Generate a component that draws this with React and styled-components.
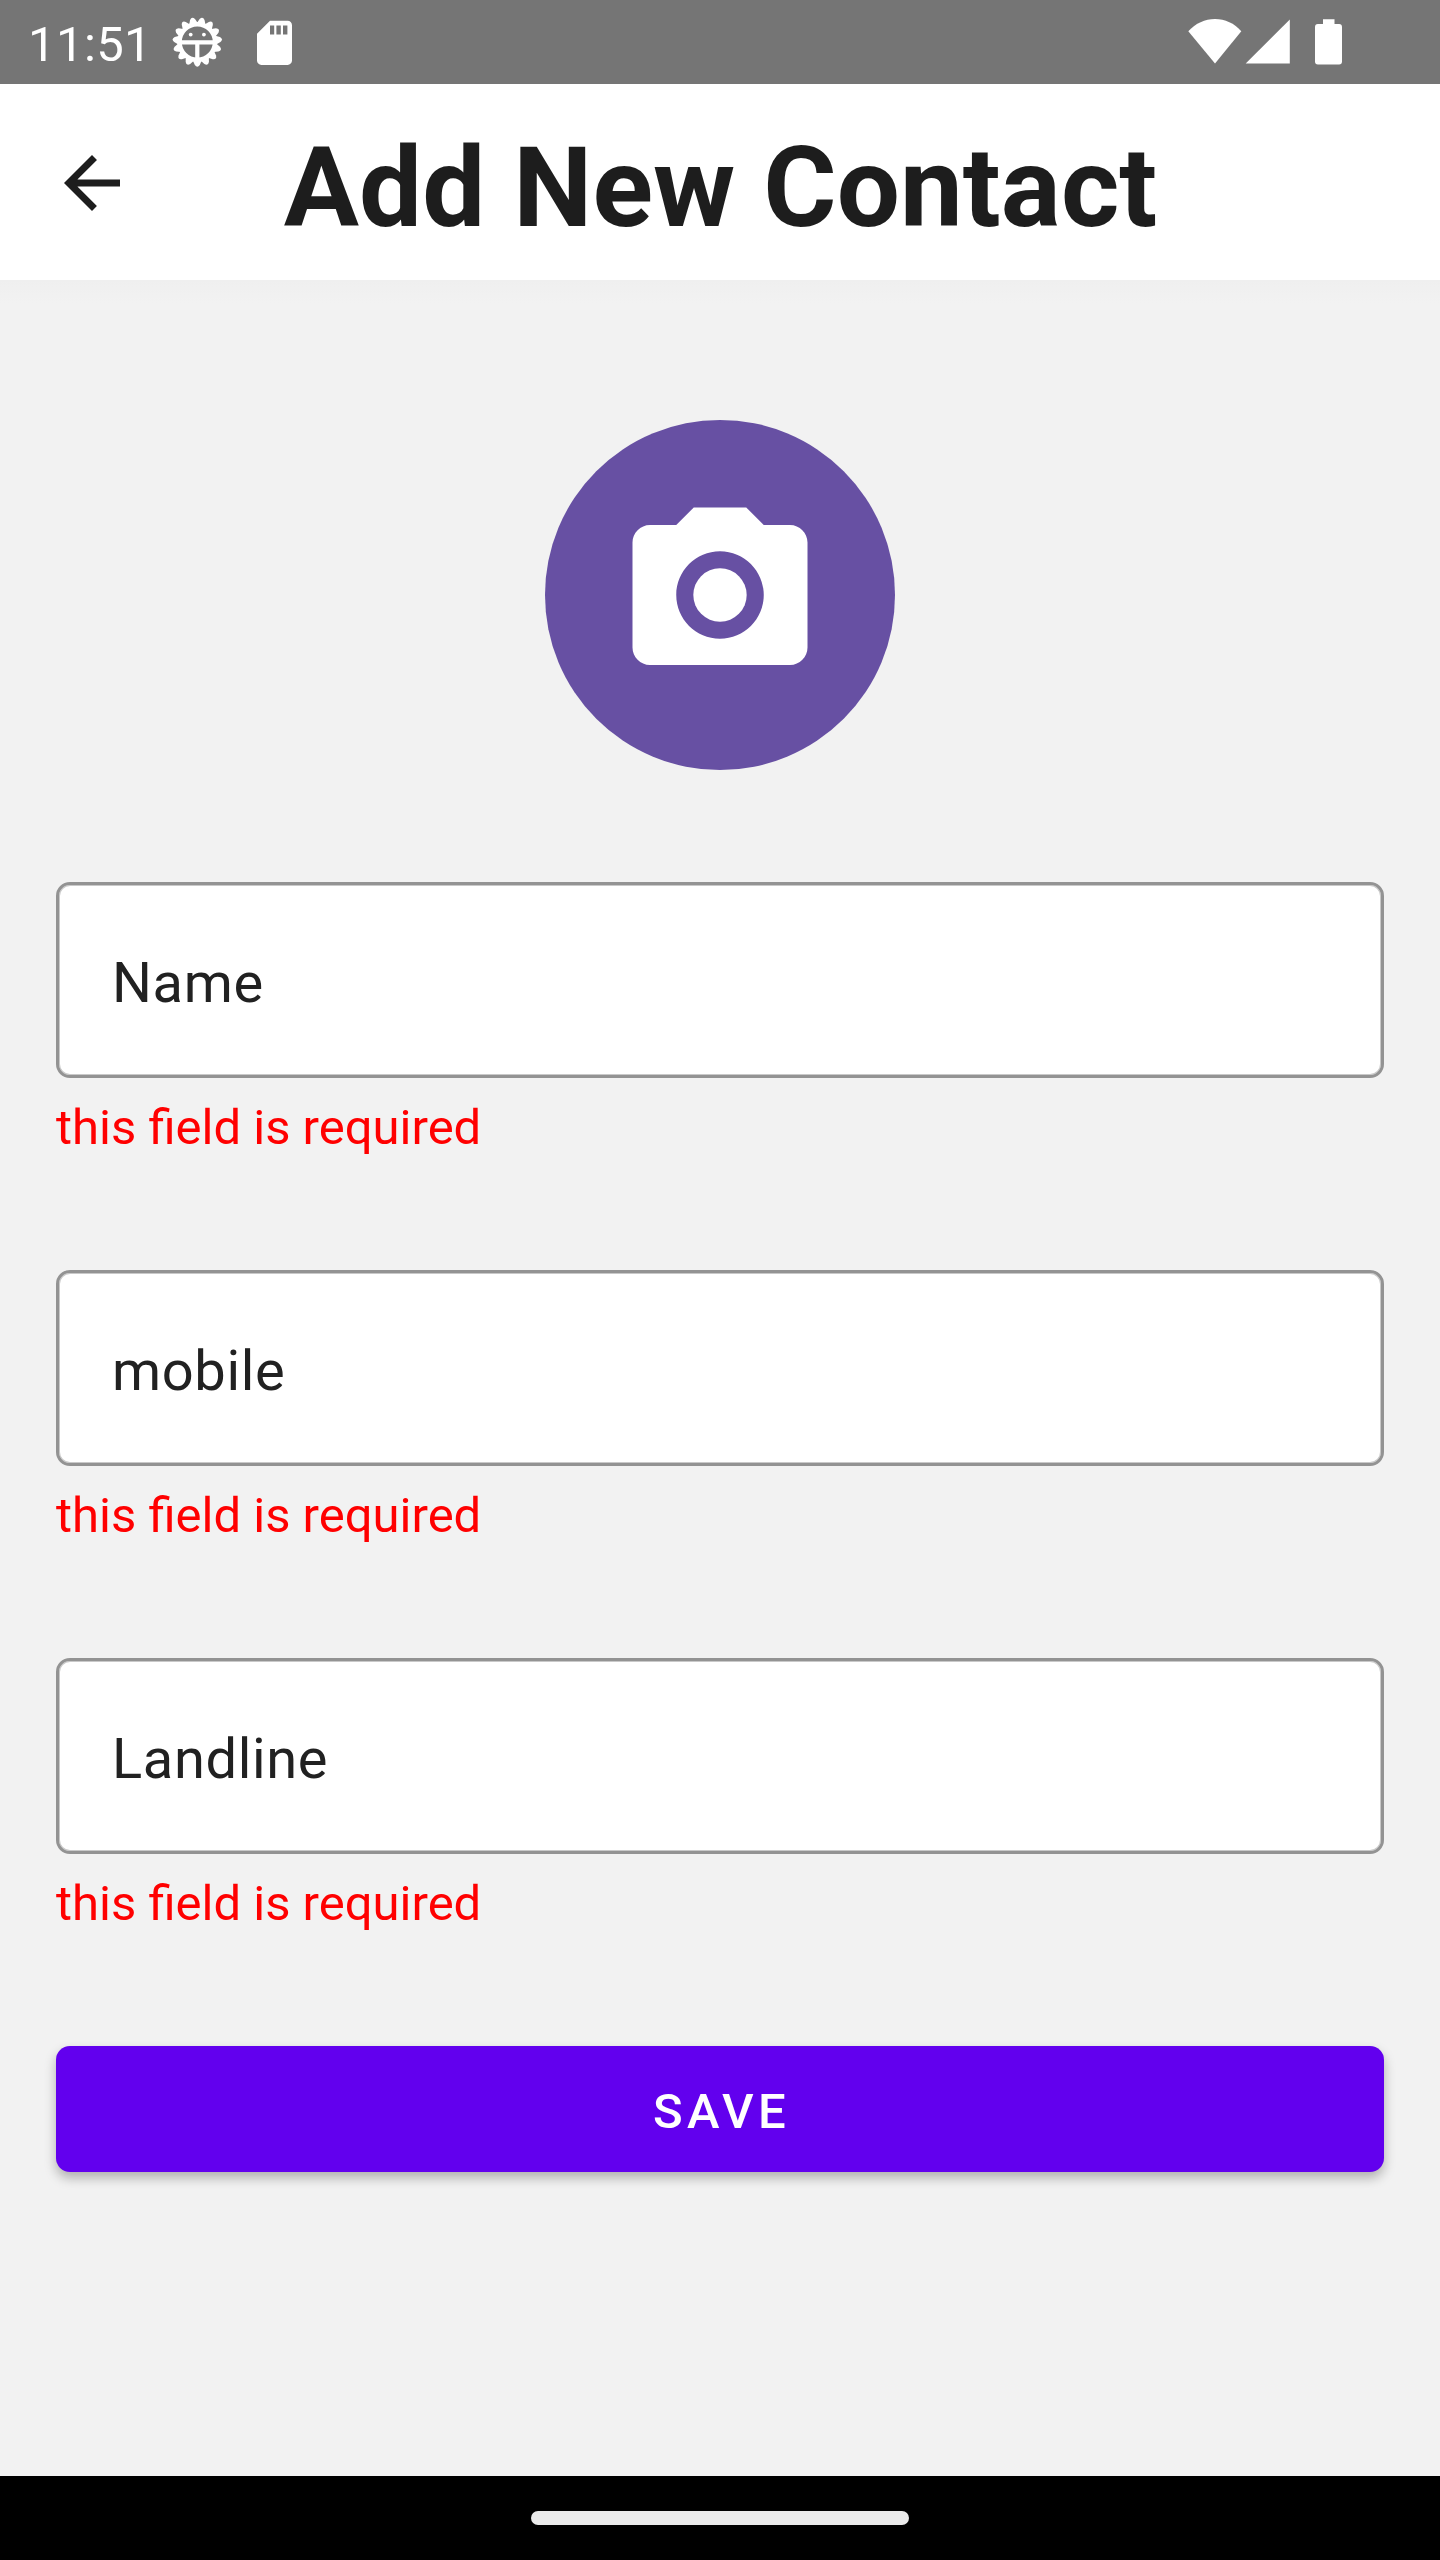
import React from "react";
import styled, { createGlobalStyle } from "styled-components";

const GlobalStyle = createGlobalStyle`
  *, *::before, *::after { box-sizing: border-box; }
  body { margin: 0; background: #f2f2f2; font-family: Roboto, "Noto Sans", sans-serif; }
`;

const Screen = styled.div`
  display: flex;
  flex-direction: column;
  width: 1440px;
  height: 2560px;
  background: #f2f2f2;
  overflow: hidden;
`;

const StatusBar = styled.header`
  display: flex;
  align-items: center;
  flex: none;
  height: 84px;
  padding: 0 98px 0 28px;
  background: #757575;
  color: #fff;
`;

const Clock = styled.time`
  width: 143px;
  padding-top: 4px;
  font-size: 49px;
  line-height: 57px;
  letter-spacing: 0.4px;
`;

const StatusGroup = styled.div`
  display: flex;
  align-items: center;
  margin-left: ${({ $end }) => ($end ? "auto" : "0")};
`;

const Glyph = styled.svg`
  display: block;
  flex: none;
  margin-left: ${({ $gap }) => $gap || 0}px;
`;

const AppBar = styled.div`
  display: grid;
  grid-template-columns: 168px 1fr 168px;
  align-items: center;
  flex: none;
  height: 196px;
  padding: 0 8px;
  background: #fff;
`;

const BackButton = styled.button`
  display: flex;
  align-items: center;
  justify-content: center;
  width: 168px;
  height: 168px;
  padding: 2px 0 0;
  border: 0;
  background: none;
  color: #1d1d1d;
`;

const Title = styled.h1`
  margin: 0;
  padding: 11px 0 0 1px;
  font-size: 112px;
  line-height: 131px;
  font-weight: 700;
  letter-spacing: 0.1px;
  text-align: center;
  white-space: nowrap;
  color: #1d1d1d;
`;

const Content = styled.main`
  display: flex;
  flex-direction: column;
  flex: 1;
  padding: 140px 56px 0;
  background: linear-gradient(#efefef, #f2f2f2 24px);
`;

const PhotoPicker = styled.button`
  display: flex;
  align-items: center;
  justify-content: center;
  align-self: center;
  width: 350px;
  height: 350px;
  margin-bottom: 112px;
  padding: 0;
  border: 0;
  border-radius: 50%;
  background: #6750a3;
`;

const FormGroup = styled.div`
  height: 388px;
`;

const Field = styled.div`
  display: flex;
  align-items: center;
  height: 196px;
  padding: 6px 53px 0;
  border: 3px solid #939393;
  border-radius: 14px;
  box-shadow: inset 0 0 0 1px #c9c9c9;
  background: #fff;
  color: #212121;
  font-size: 56px;
  line-height: 66px;
  letter-spacing: 0.65px;
`;

const ErrorText = styled.p`
  margin: 0;
  padding-top: 21px;
  color: #ff0000;
  font-size: 49px;
  line-height: 57px;
`;

const SaveButton = styled.button`
  display: flex;
  align-items: center;
  justify-content: center;
  flex: none;
  height: 126px;
  padding: 4px 0 0 3px;
  border: 0;
  border-radius: 14px;
  background: #6200ee;
  box-shadow: 0 6px 12px rgba(0, 0, 0, 0.28);
  color: #fff;
  font-family: inherit;
  font-size: 49px;
  line-height: 57px;
  font-weight: 500;
  letter-spacing: 4.375px;
`;

const NavigationBar = styled.footer`
  display: flex;
  align-items: center;
  justify-content: center;
  flex: none;
  height: 84px;
  background: #000;
`;

const HomeHandle = styled.div`
  width: 378px;
  height: 14px;
  border-radius: 7px;
  background: #ebebeb;
`;

const TEETH = Array.from({ length: 15 }, (_, i) => 12 + i * 24);
const FIELDS = ["Name", "mobile", "Landline"];

function DebugIcon() {
  return (
    <Glyph width="52" height="52" viewBox="-26.3 -26 52 52">
      {TEETH.map((angle) => (
        <path
          key={angle}
          d="M-4.400 -18.500L-2.500 -23Q0 -26.600 2.500 -23L4.400 -18.500Z"
          fill="#fff"
          transform={`rotate(${angle})`}
        />
      ))}
      <circle r="17.700" fill="none" stroke="#fff" strokeWidth="4.400" />
      <path d="M-17 0.400H17M0 0.400V17" stroke="#fff" strokeWidth="4.200" />
      <circle cx="-6.600" cy="-7.400" r="1.900" fill="#fff" />
      <circle cx="6.600" cy="-7.400" r="1.900" fill="#fff" />
    </Glyph>
  );
}

function SdCardIcon() {
  return (
    <Glyph $gap={34} width="35" height="45" viewBox="0 -0.5 35 45">
      <path
        fill="#fff"
        fillRule="evenodd"
        d="M13 0.300H30.600A4.400 4.400 0 0 1 35 4.700V40A4.400 4.400 0 0 1 30.600 44.400H4.400A4.400 4.400 0 0 1 0 40V13.300ZM13 5V14H17.200V5ZM19.400 5V14H23.800V5ZM26 5V14H30.400V5Z"
      />
    </Glyph>
  );
}

function WifiIcon() {
  return (
    <Glyph width="54" height="46" viewBox="0 0 54 46">
      <path fill="#fff" d="M27 44.500L0.300 12.300C7.600 4.400 17 0.100 27 0.100S46.400 4.400 53.300 12.300Z" />
    </Glyph>
  );
}

function SignalIcon() {
  return (
    <Glyph $gap={3} width="46" height="46" viewBox="0 0 46 46">
      <path fill="#fff" d="M0.700 44.400L44.800 0.500V44.400Z" />
    </Glyph>
  );
}

function BatteryIcon() {
  return (
    <Glyph $gap={24} width="27" height="46" viewBox="0 0 27 46">
      <path
        fill="#fff"
        d="M8 0.200H19.500V5H24.100A2.900 2.900 0 0 1 27 7.900V42.600A2.900 2.900 0 0 1 24.100 45.500H2.900A2.900 2.900 0 0 1 0 42.600V7.900A2.900 2.900 0 0 1 2.900 5H8Z"
      />
    </Glyph>
  );
}

export default function App() {
  return (
    <>
      <GlobalStyle />
      <Screen>
        <StatusBar>
          <Clock>11:51</Clock>
          <StatusGroup>
            <DebugIcon />
            <SdCardIcon />
          </StatusGroup>
          <StatusGroup $end>
            <WifiIcon />
            <SignalIcon />
            <BatteryIcon />
          </StatusGroup>
        </StatusBar>
        <AppBar>
          <BackButton aria-label="Back">
            <Glyph width="84" height="84" viewBox="0 0 24 24">
              <path
                fill="currentColor"
                d="M20 11H7.830l5.590-5.590L12 4l-8 8 8 8 1.410-1.410L7.830 13H20v-2z"
              />
            </Glyph>
          </BackButton>
          <Title>Add New Contact</Title>
        </AppBar>
        <Content>
          <PhotoPicker aria-label="Add photo">
            <Glyph width="210" height="210" viewBox="0 0 24 24" fill="#fff">
              <circle cx="12" cy="12" r="3.050" />
              <path d="M9 2L7 4H4c-1.100 0-2 .9-2 2v12c0 1.100.9 2 2 2h16c1.100 0 2-.9 2-2V6c0-1.100-.9-2-2-2h-3l-2-2H9zm3 15c-2.760 0-5-2.240-5-5s2.240-5 5-5 5 2.240 5 5-2.240 5-5 5z" />
            </Glyph>
          </PhotoPicker>
          {FIELDS.map((label) => (
            <FormGroup key={label}>
              <Field>{label}</Field>
              <ErrorText>this field is required</ErrorText>
            </FormGroup>
          ))}
          <SaveButton>SAVE</SaveButton>
        </Content>
        <NavigationBar>
          <HomeHandle />
        </NavigationBar>
      </Screen>
    </>
  );
}
